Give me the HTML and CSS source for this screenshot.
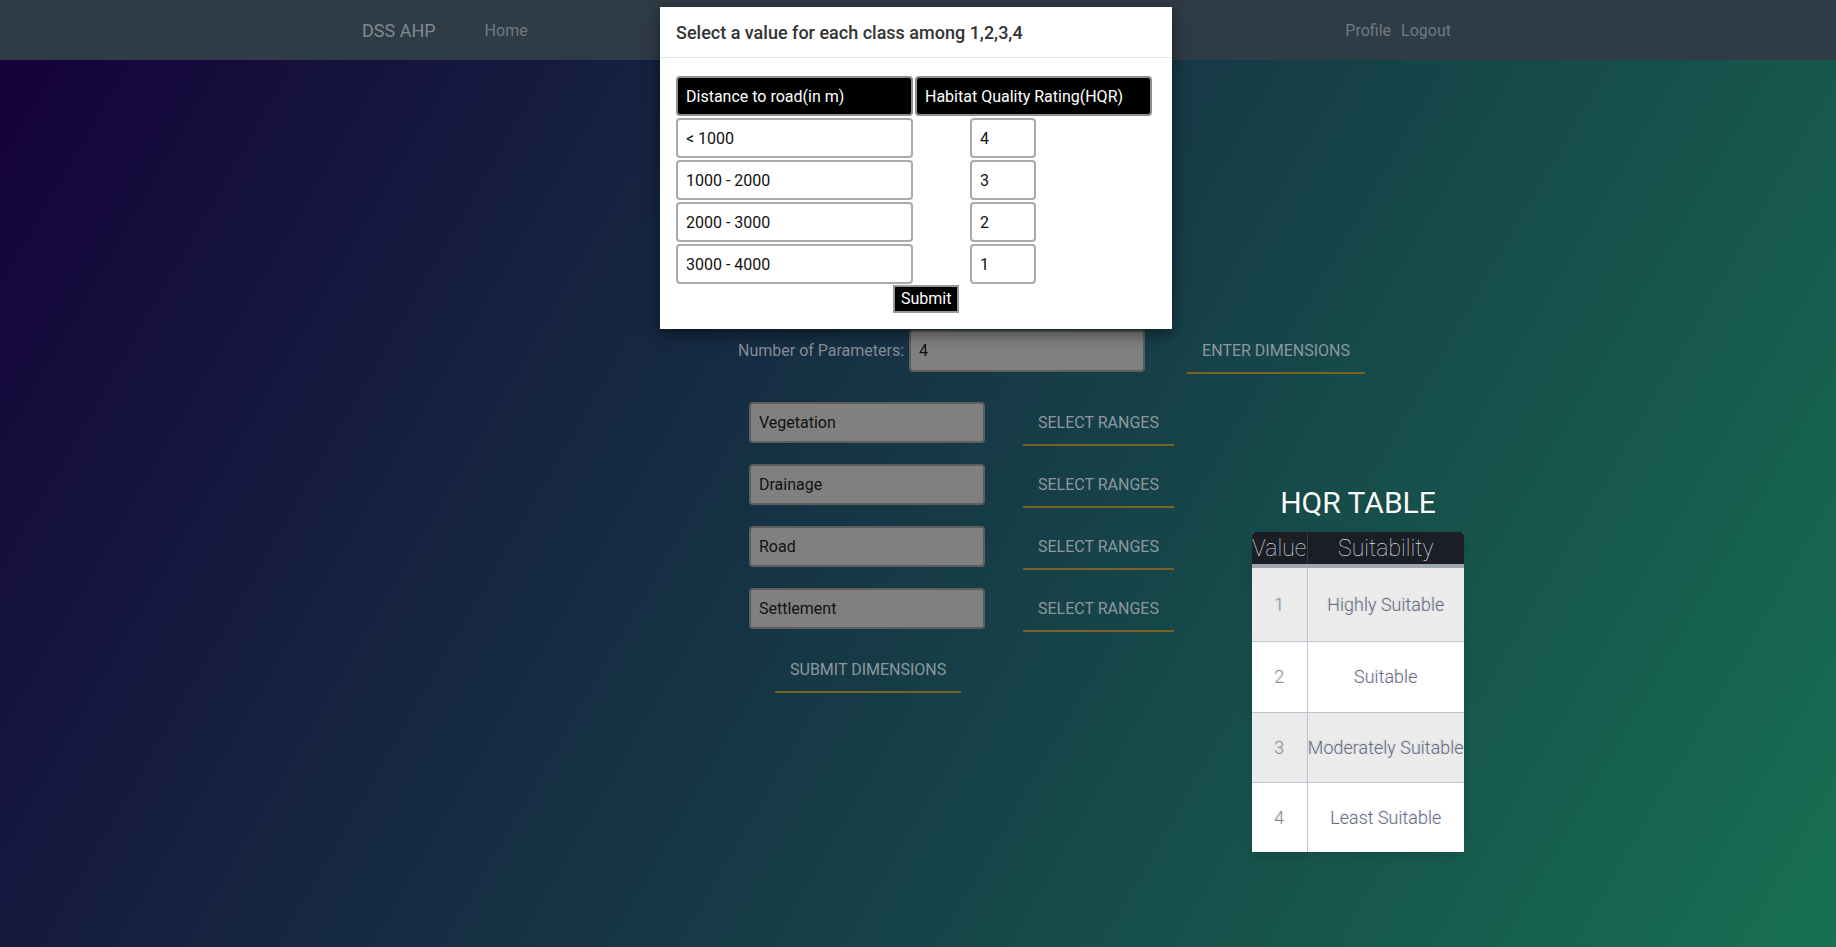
FILE: index.html
```html
<!DOCTYPE html>
<html lang="en">
<head>
<meta charset="utf-8">
<title>DSS AHP</title>
<link rel="stylesheet" href="styles.css">
</head>
<body>
<nav class="navbar">
  <div class="nav-inner">
    <a class="brand" href="#">DSS AHP</a>
    <a class="nav-link home" href="#">Home</a>
    <div class="spacer"></div>
    <a class="nav-link" href="#">Profile</a>
    <a class="nav-link logout" href="#">Logout</a>
  </div>
</nav>

<main class="main">
  <div class="dims-row">
    <label class="dims-label">Number of Parameters:</label>
    <input class="field dims-input" type="text" value="4">
    <button class="flat-btn enter-btn">Enter Dimensions</button>
  </div>

  <div class="lower">
    <div class="params">
      <div class="param-row">
        <input class="field param-input" type="text" value="Vegetation">
        <button class="flat-btn range-btn">Select Ranges</button>
      </div>
      <div class="param-row">
        <input class="field param-input" type="text" value="Drainage">
        <button class="flat-btn range-btn">Select Ranges</button>
      </div>
      <div class="param-row">
        <input class="field param-input" type="text" value="Road">
        <button class="flat-btn range-btn">Select Ranges</button>
      </div>
      <div class="param-row">
        <input class="field param-input" type="text" value="Settlement">
        <button class="flat-btn range-btn">Select Ranges</button>
      </div>
      <button class="flat-btn submit-dims">Submit Dimensions</button>
    </div>

    <div class="hqr">
      <h3 class="hqr-title">HQR TABLE</h3>
      <table class="hqr-table">
        <thead>
          <tr><th>Value</th><th>Suitability</th></tr>
        </thead>
        <tbody>
          <tr><td>1</td><td>Highly Suitable</td></tr>
          <tr><td>2</td><td>Suitable</td></tr>
          <tr><td>3</td><td>Moderately Suitable</td></tr>
          <tr><td>4</td><td>Least Suitable</td></tr>
        </tbody>
      </table>
    </div>
  </div>
</main>

<div class="modal">
  <div class="modal-header">
    <h4 class="modal-title">Select a value for each class among 1,2,3,4</h4>
  </div>
  <div class="modal-body">
    <table class="class-table">
      <thead>
        <tr><th>Distance to road(in m)</th><th>Habitat Quality Rating(HQR)</th></tr>
      </thead>
      <tbody>
        <tr><td><input class="cls-input" type="text" value="&lt; 1000"></td><td><input class="val-input" type="text" value="4"></td></tr>
        <tr><td><input class="cls-input" type="text" value="1000 - 2000"></td><td><input class="val-input" type="text" value="3"></td></tr>
        <tr><td><input class="cls-input" type="text" value="2000 - 3000"></td><td><input class="val-input" type="text" value="2"></td></tr>
        <tr><td><input class="cls-input" type="text" value="3000 - 4000"></td><td><input class="val-input" type="text" value="1"></td></tr>
      </tbody>
    </table>
    <div class="submit-wrap"><button class="submit-btn">Submit</button></div>
  </div>
</div>
</body>
</html>
```

FILE: styles.css
```css
* { box-sizing: border-box; }

html, body { margin: 0; padding: 0; }

body {
  font-family: Roboto, "Liberation Sans", Arial, sans-serif;
  min-height: 947px;
  background: linear-gradient(120deg, #150039 0%, #177052 100%);
  position: relative;
}

/* Navbar */
.navbar {
  height: 60px;
  background: #2f3b45;
}
.nav-inner {
  display: flex;
  align-items: center;
  height: 60px;
  margin: 0 385px 0 362px;
}
.brand {
  font-size: 18px;
  color: #7f8990;
  text-decoration: none;
}
.nav-link {
  font-size: 16px;
  color: #6f7a82;
  text-decoration: none;
}
.home { margin-left: 49px; }
.spacer { flex: 1; }
.logout { margin-left: 10px; }

/* Main */
.main { padding-top: 267px; }

.dims-row {
  display: flex;
  align-items: center;
  margin-left: 738px;
}
.dims-label {
  font-size: 16px;
  color: #878d96;
  white-space: nowrap;
}
.field {
  height: 41px;
  background: #808080;
  border: 2px solid #5e5e5e;
  border-radius: 4px;
  padding: 0 8px;
  font-family: Roboto, "Liberation Sans", Arial, sans-serif;
  font-size: 16px;
  color: #111;
}
.dims-input {
  width: 236px;
  height: 42px;
  margin-left: 5px;
}
.flat-btn {
  background: transparent;
  border: none;
  border-bottom: 2px solid #7a6328;
  padding: 14px 15px 12px;
  font-family: Roboto, "Liberation Sans", Arial, sans-serif;
  font-size: 16px;
  line-height: 19px;
  text-transform: uppercase;
  white-space: nowrap;
  color: #8d989e;
}
.enter-btn { margin-left: 42px; }

.lower {
  display: flex;
  align-items: flex-start;
  margin-left: 749px;
  margin-top: 25px;
}
.params {
  display: flex;
  flex-direction: column;
  align-items: flex-start;
  gap: 15px;
  width: 425px;
}
.param-row {
  display: flex;
  align-items: center;
}
.param-input { width: 236px; }
.range-btn { margin-left: 38px; }
.submit-dims {
  margin-left: 26px;
  margin-top: -1px;
}

/* HQR table */
.hqr {
  margin-left: 78px;
  margin-top: 86px;
  width: 212px;
}
.hqr-title {
  margin: 0 0 12px;
  text-align: center;
  font-size: 30px;
  font-weight: 400;
  color: #fafafa;
  text-shadow: -1px -1px 1px rgba(0, 0, 0, 0.1);
}
.hqr-table {
  width: 212px;
  height: 320px;
  border-collapse: collapse;
  background: #fff;
  border-radius: 3px;
  box-shadow: 0 5px 10px rgba(0, 0, 0, 0.1);
}
.hqr-table th {
  color: #d5dde5;
  background: #1b1e24;
  border-bottom: 4px solid #9ea7af;
  border-right: 1px solid #343a45;
  font-size: 23px;
  font-weight: 100;
  padding: 0;
  text-align: center;
  height: 34px;
}
.hqr-table th:first-child { border-top-left-radius: 3px; }
.hqr-table th:last-child { border-top-right-radius: 3px; border-right: none; }
.hqr-table tr {
  border-top: 1px solid #c1c3d1;
  border-bottom: 1px solid #c1c3d1;
}
.hqr-table thead tr { border-top: none; }
.hqr-table td {
  background: #fff;
  color: #666b85;
  font-size: 18px;
  font-weight: 300;
  text-align: center;
  padding: 0;
  border-right: 1px solid #c1c3d1;
  text-shadow: -1px -1px 1px rgba(0, 0, 0, 0.1);
}
.hqr-table td:last-child { border-right: none; }
.hqr-table td:first-child { color: #8a8a96; }
.hqr-table tbody tr:nth-child(odd) td { background: #ebebeb; }
.hqr-table tbody tr:last-child { border-bottom: none; }

/* Modal */
.modal {
  position: absolute;
  top: 7px;
  left: 660px;
  width: 512px;
  background: #fff;
  box-shadow: 0 5px 15px rgba(0, 0, 0, 0.5);
}
.modal-header {
  padding: 15px 16px 14px;
  border-bottom: 1px solid #e5e5e5;
}
.modal-title {
  margin: 0;
  font-size: 18px;
  font-weight: 500;
  line-height: 21px;
  color: #333;
}
.modal-body {
  padding: 16px 14px 16px;
}
.class-table {
  border-collapse: separate;
  border-spacing: 2px;
}
.class-table th {
  width: 237px;
  height: 40px;
  background: #000;
  color: #fff;
  border: 2px solid #8f8f8f;
  border-radius: 4px;
  text-align: left;
  font-size: 16px;
  font-weight: 400;
  padding: 0 9px 0 8px;
  white-space: nowrap;
}
.class-table td { padding: 0; }
.cls-input, .val-input {
  display: block;
  height: 40px;
  background: #fff;
  border: 2px solid #aaa;
  border-radius: 4px;
  padding: 0 8px;
  font-family: Roboto, "Liberation Sans", Arial, sans-serif;
  font-size: 16px;
  color: #111;
}
.cls-input { width: 237px; }
.val-input { width: 66px; margin-left: 55px; }

.submit-wrap {
  padding-left: 219px;
  margin-top: -1px;
}
.submit-btn {
  background: #000;
  color: #fff;
  border: 2px solid #999;
  padding: 3px 6px;
  font-family: Roboto, "Liberation Sans", Arial, sans-serif;
  font-size: 16px;
  line-height: 18px;
}
```
